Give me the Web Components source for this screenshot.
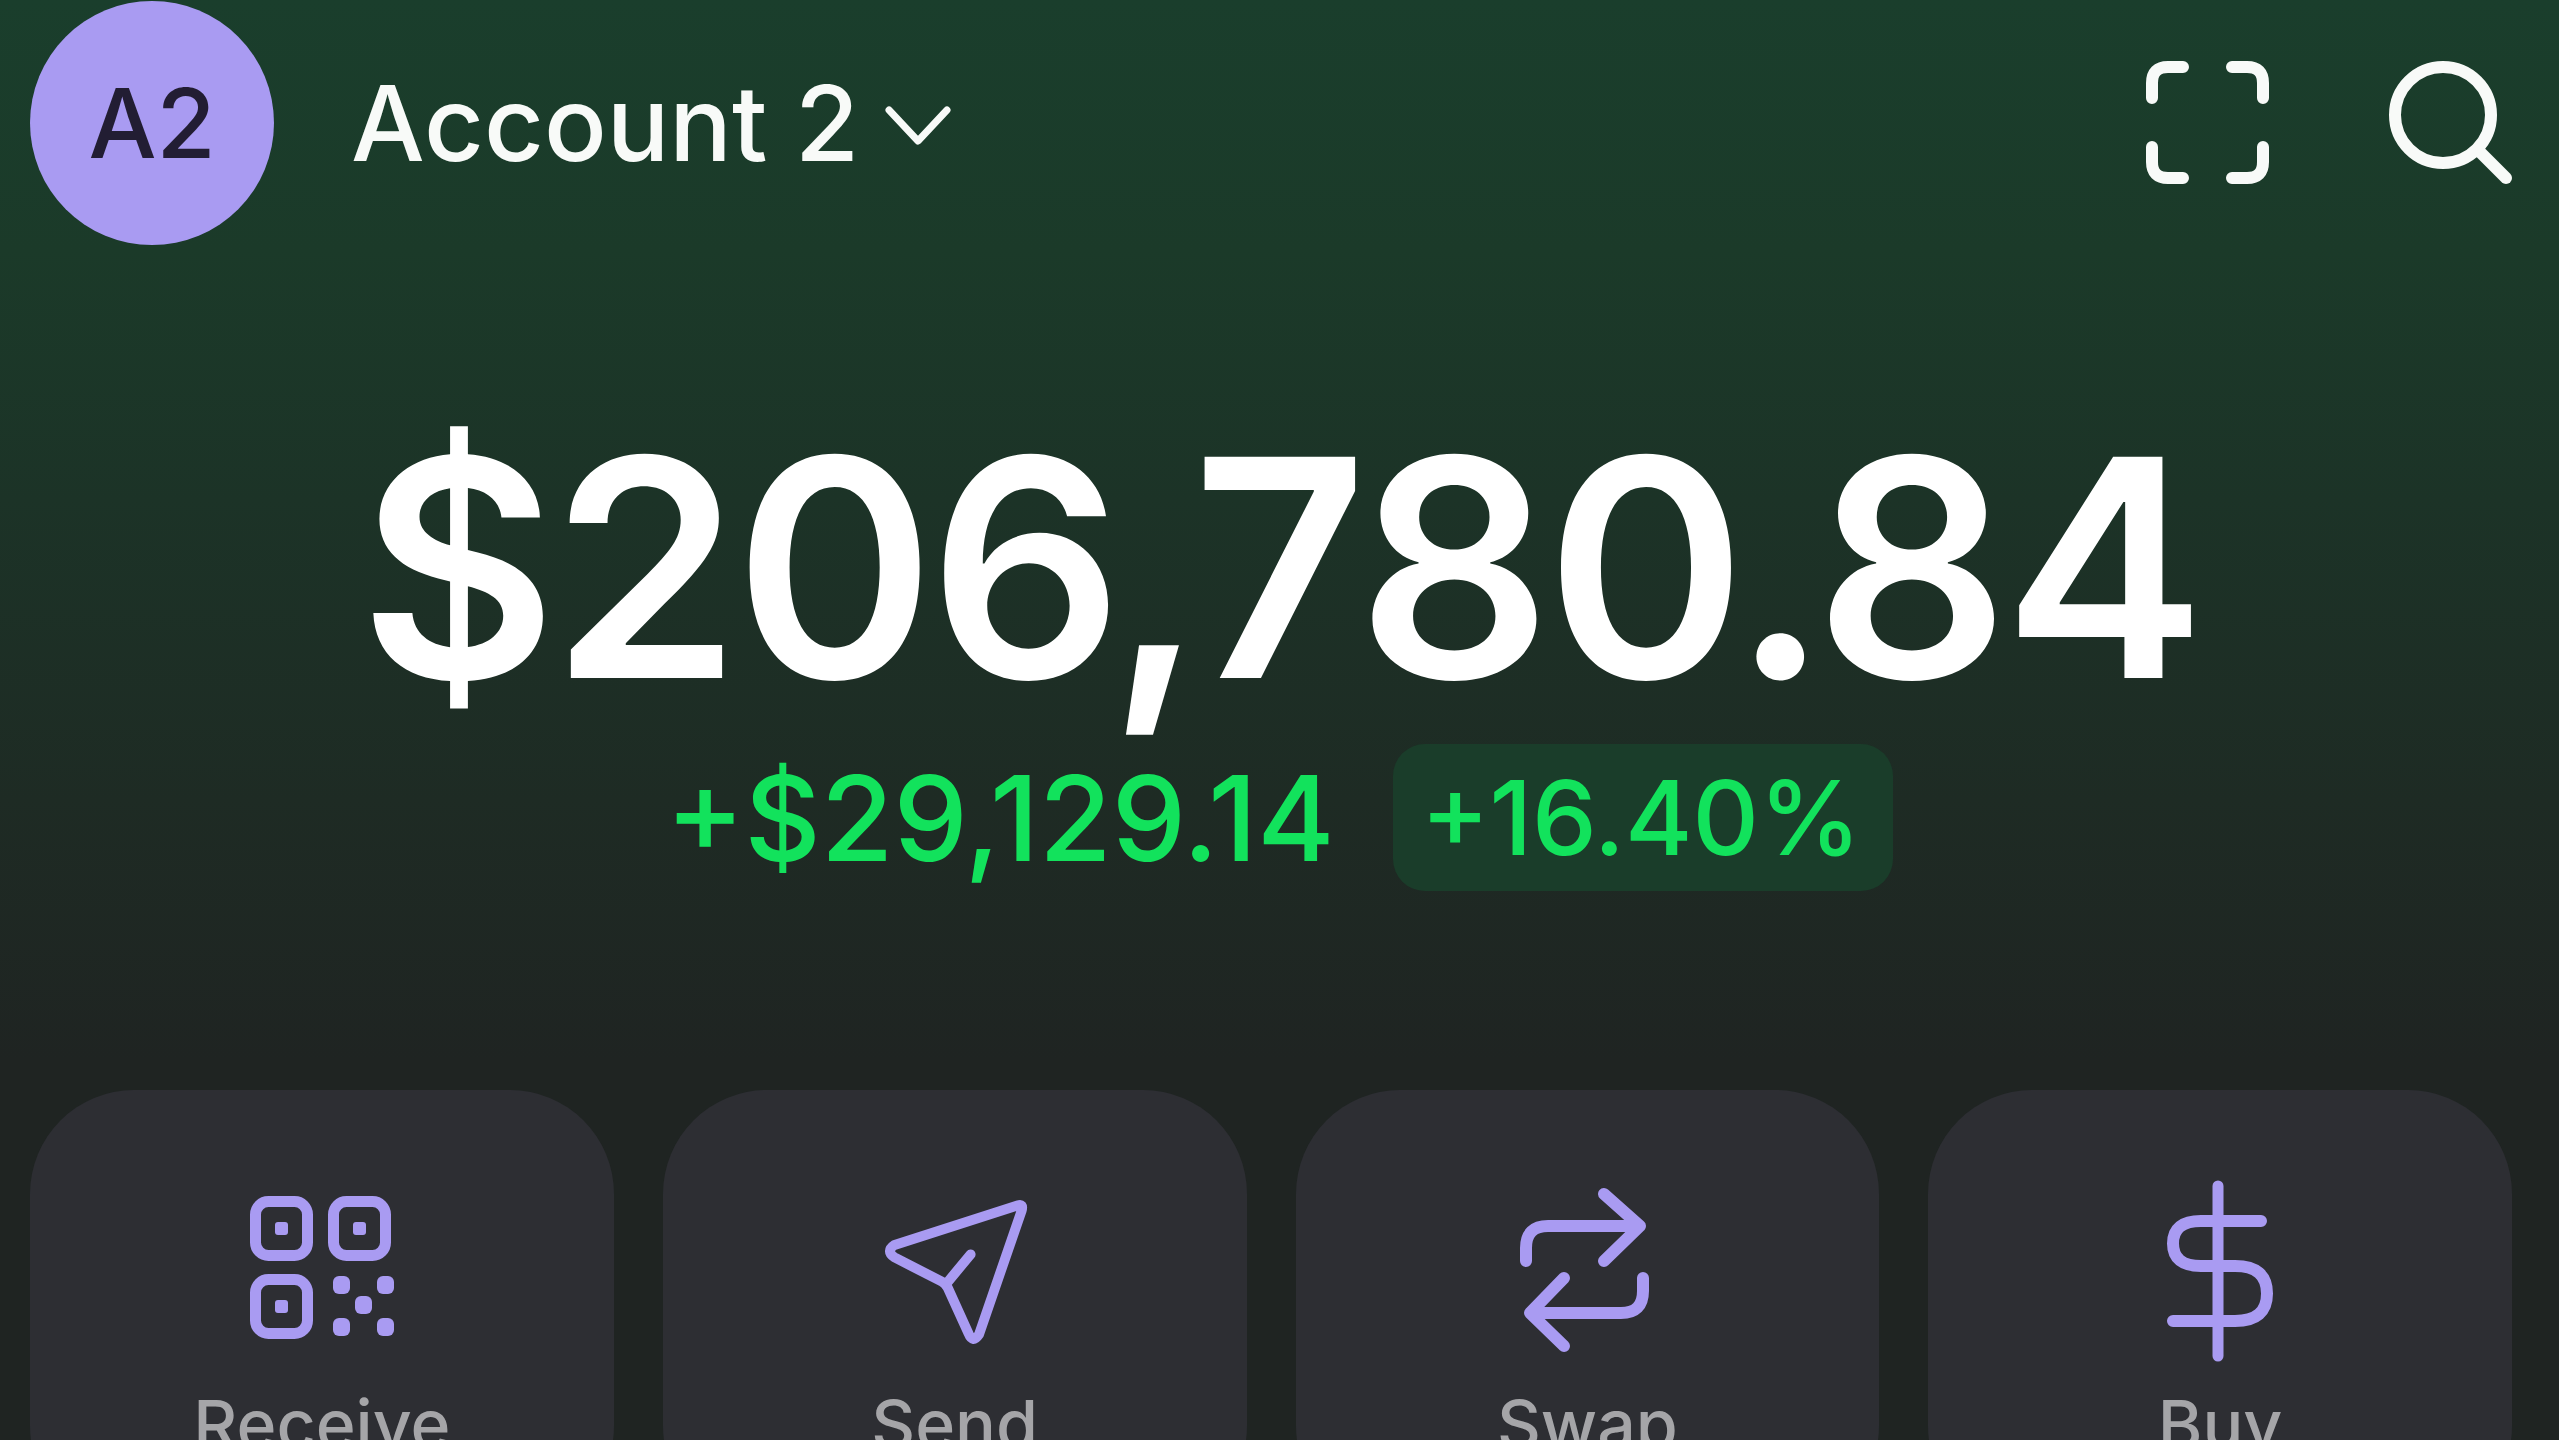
<!DOCTYPE html>
<html>
<head>
<meta charset="utf-8">
<title>Wallet</title>
<style>
    html, body { margin: 0; height: 100%; overflow: hidden; background: #1f2422; }
    body { font-family: 'Inter', 'Liberation Sans', sans-serif; }
</style>
</head>
<body>
<wallet-screen>
    <wallet-header name="Account 2" initials="A2"></wallet-header>
    <wallet-balance amount="$206,780.84" change="+$29,129.14" percent="+16.40%"></wallet-balance>
    <action-row>
        <action-card label="Receive" icon="qr"></action-card>
        <action-card label="Send" icon="send"></action-card>
        <action-card label="Swap" icon="swap"></action-card>
        <action-card label="Buy" icon="dollar"></action-card>
    </action-row>
</wallet-screen>

<script>
const ICONS = {
    qr: `<svg width="150" height="150" viewBox="0 0 150 150" fill="none" stroke="currentColor" stroke-width="11">
        <rect x="8.5" y="5.5" width="52" height="54" rx="13"/>
        <rect x="86.5" y="5.5" width="52" height="54" rx="13"/>
        <rect x="8.5" y="83.5" width="52" height="54" rx="13"/>
        <g fill="currentColor" stroke="none">
            <rect x="28" y="26" width="13" height="13" rx="3"/>
            <rect x="106" y="26" width="13" height="13" rx="3"/>
            <rect x="28" y="104" width="13" height="13" rx="3"/>
            <rect x="86" y="80" width="17" height="18" rx="6"/>
            <rect x="130" y="80" width="17" height="18" rx="6"/>
            <rect x="108" y="100" width="17" height="18" rx="6"/>
            <rect x="86" y="122" width="17" height="18" rx="6"/>
            <rect x="130" y="122" width="17" height="18" rx="6"/>
        </g>
    </svg>`,
    send: `<svg width="150" height="150" viewBox="0 0 142 144" fill="none" stroke="currentColor" stroke-width="9.5" stroke-linecap="round" stroke-linejoin="round">
        <path d="M131 9 Q137 7 135 14 L94 133 Q88 142 84 132 L64 88 Q62 84 58 82 L13 59 Q4 53 13 47 Z"/>
        <path d="M62 85 L86 56"/>
    </svg>`,
    swap: `<svg width="150" height="170" viewBox="0 0 150 170" fill="none" stroke="currentColor" stroke-width="12" stroke-linecap="round" stroke-linejoin="round">
        <path d="M92 8 L128 40 L92 75"/>
        <path d="M14 75 V62 Q14 40 36 40 H126"/>
        <path d="M52 92 L18 127 L52 160"/>
        <path d="M131 92 V105 Q131 127 109 127 H20"/>
    </svg>`,
    dollar: `<svg width="122" height="186" viewBox="0 0 122 186" fill="none" stroke="currentColor" stroke-width="12" stroke-linecap="round" stroke-linejoin="round">
        <path d="M59 8 V178" stroke-width="11"/>
        <path d="M102 43 H42 Q14 43 14 65.5 Q14 88 42 88 H76 Q108 88 108 115.5 Q108 143 76 143 H14"/>
    </svg>`
};

class WalletScreen extends HTMLElement {
    connectedCallback() {
        this.attachShadow({ mode: 'open' });
        this.shadowRoot.innerHTML = `
            <style>
                :host {
                    display: flex;
                    flex-direction: column;
                    width: 2559px;
                    height: 1440px;
                    overflow: hidden;
                    box-sizing: border-box;
                    background: linear-gradient(180deg, #1a3e2c 0px, #1b3a29 250px, #1c3327 500px, #1e2b24 800px, #1f2422 1060px);
                }
            </style>
            <slot></slot>
        `;
    }
}

class WalletHeader extends HTMLElement {
    connectedCallback() {
        this.attachShadow({ mode: 'open' });
        this.shadowRoot.innerHTML = `
            <style>
                :host {
                    display: flex;
                    align-items: center;
                    height: 245px;
                    padding: 0 47px 0 30px;
                    color: #f8faf8;
                    flex: none;
                }
                .avatar {
                    width: 244px;
                    height: 244px;
                    border-radius: 50%;
                    background: #a99bf2;
                    color: #221d33;
                    display: flex;
                    align-items: center;
                    justify-content: center;
                    font-size: 96px;
                    font-weight: 500;
                    flex: none;
                }
                .name {
                    margin-left: 77px;
                    font-size: 104px;
                    font-weight: 500;
                    line-height: 1;
                }
                .chevron { margin-left: 26px; margin-top: 6px; }
                .actions {
                    margin-left: auto;
                    display: flex;
                    align-items: center;
                    gap: 120px;
                }
                svg { display: block; }
            </style>
            <div class="avatar">${this.getAttribute('initials')}</div>
            <div class="name">${this.getAttribute('name')}</div>
            <svg class="chevron" width="66" height="42" viewBox="0 0 66 42" fill="none" stroke="currentColor" stroke-width="7" stroke-linecap="round" stroke-linejoin="round"><path d="M4 5 L33 36 L62 5"/></svg>
            <div class="actions">
                <svg width="123" height="123" viewBox="0 0 123 123" fill="none" stroke="currentColor" stroke-width="12" stroke-linecap="round" stroke-linejoin="round">
                    <path d="M6 37 V22 Q6 6 22 6 H37"/>
                    <path d="M86 6 H101 Q117 6 117 22 V37"/>
                    <path d="M6 86 V101 Q6 117 22 117 H37"/>
                    <path d="M117 86 V101 Q117 117 101 117 H86"/>
                </svg>
                <svg width="123" height="123" viewBox="0 0 123 123" fill="none" stroke="currentColor" stroke-width="12" stroke-linecap="round">
                    <circle cx="54" cy="54" r="48"/>
                    <path d="M90 90 L117 117"/>
                </svg>
            </div>
        `;
    }
}

class WalletBalance extends HTMLElement {
    connectedCallback() {
        this.attachShadow({ mode: 'open' });
        this.shadowRoot.innerHTML = `
            <style>
                :host {
                    display: flex;
                    flex-direction: column;
                    align-items: center;
                    flex: none;
                    padding-top: 150px;
                    padding-bottom: 199px;
                }
                .amount {
                    color: #fff;
                    font-size: 304px;
                    font-weight: 600;
                    line-height: 344px;
                    letter-spacing: -6px;
                    white-space: nowrap;
                }
                .delta {
                    display: flex;
                    align-items: center;
                    gap: 58px;
                    color: #12e25c;
                    font-size: 118px;
                    font-weight: 500;
                    white-space: nowrap;
                    margin-top: 5px;
                }
                .pill {
                    background: #1a3d2a;
                    border-radius: 32px;
                    height: 147px;
                    padding: 0 32px 0 28px;
                    display: flex;
                    align-items: center;
                    font-size: 103px;
                }
            </style>
            <div class="amount">${this.getAttribute('amount')}</div>
            <div class="delta">
                <span>${this.getAttribute('change')}</span>
                <span class="pill">${this.getAttribute('percent')}</span>
            </div>
        `;
    }
}

class ActionRow extends HTMLElement {
    connectedCallback() {
        this.attachShadow({ mode: 'open' });
        this.shadowRoot.innerHTML = `
            <style>
                :host {
                    display: grid;
                    grid-template-columns: repeat(4, 1fr);
                    gap: 49px;
                    padding: 0 47px 0 30px;
                    flex: none;
                }
            </style>
            <slot></slot>
        `;
    }
}

class ActionCard extends HTMLElement {
    connectedCallback() {
        this.attachShadow({ mode: 'open' });
        this.shadowRoot.innerHTML = `
            <style>
                :host {
                    display: flex;
                    flex-direction: column;
                    align-items: center;
                    height: 440px;
                    box-sizing: border-box;
                    background: #2d2e33;
                    border-radius: 104px;
                }
                .icon {
                    height: 170px;
                    margin-top: 96px;
                    display: flex;
                    align-items: center;
                    justify-content: center;
                    color: #a99bf2;
                }
                svg { display: block; }
                .label {
                    margin-top: 28px;
                    color: #a5a5a8;
                    font-size: 68px;
                    font-weight: 500;
                    line-height: 1.2;
                }
            </style>
            <div class="icon">${ICONS[this.getAttribute('icon')]}</div>
            <div class="label">${this.getAttribute('label')}</div>
        `;
    }
}

customElements.define('wallet-screen', WalletScreen);
customElements.define('wallet-header', WalletHeader);
customElements.define('wallet-balance', WalletBalance);
customElements.define('action-row', ActionRow);
customElements.define('action-card', ActionCard);
</script>
</body>
</html>
